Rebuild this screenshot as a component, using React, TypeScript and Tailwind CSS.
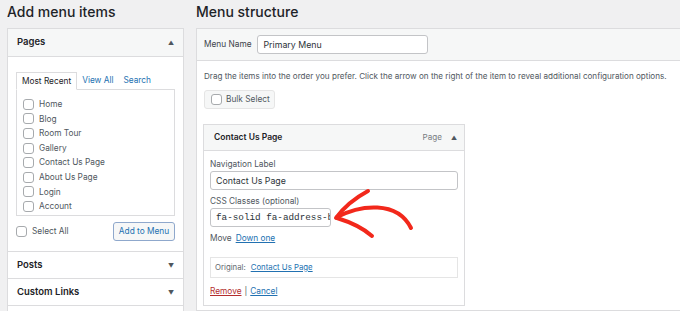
import React from 'react';

const pages = ['Home', 'Blog', 'Room Tour', 'Gallery', 'Contact Us Page', 'About Us Page', 'Login', 'Account'];

const Box = () => (
  <span className="inline-block w-[11px] h-[11px] rounded-[3px] border border-[#a7aaad] bg-white shrink-0" />
);

const Section = ({ title }: { title: string }) => (
  <div className="h-[27px] shrink-0 border-t border-[#dcdcde] px-[9px] flex items-center justify-between">
    <span className="text-[9.5px] font-semibold text-[#1d2327]">{title}</span>
    <span className="text-[6px] text-[#50575e]">▼</span>
  </div>
);

export default function App() {
  return (
    <div
      className="relative w-[680px] h-[311px] overflow-hidden bg-[#f0f0f1] flex gap-[12px] pl-[7px] text-[#3c434a]"
      style={{ fontFamily: 'Inter, "Noto Sans", sans-serif' }}
    >
      {/* left column */}
      <div className="w-[177px] shrink-0 flex flex-col overflow-hidden">
        <h2 className="h-[28px] shrink-0 pt-[3px] text-[14px] font-medium text-[#1d2327] leading-[17px]">Add menu items</h2>
        <div className="border border-[#dcdcde] bg-white flex-1 shrink-0 flex flex-col">
          <div className="h-[27px] shrink-0 bg-[#f6f7f7] px-[9px] flex items-center justify-between">
            <span className="text-[9.5px] font-semibold text-[#1d2327]">Pages</span>
            <span className="text-[6px] text-[#50575e]">▲</span>
          </div>
          <div className="shrink-0 border-t border-[#dcdcde] px-[8px] pt-[15px] pb-[10px]">
            <div className="flex items-end h-[17px] text-[8.3px]">
              <div className="relative z-10 h-[18px] -mb-px px-[5px] border border-b-white border-[#dcdcde] bg-white flex items-center text-[#1d2327]">
                Most Recent
              </div>
              <span className="ml-[5px] h-[17px] flex items-center text-[#2271b1]">View All</span>
              <span className="ml-[10px] h-[17px] flex items-center text-[#2271b1]">Search</span>
            </div>
            <div className="h-[127px] border border-[#dcdcde] pl-[6px] pt-[7px]">
              {pages.map((p) => (
                <div key={p} className="h-[14.6px] flex items-center gap-[5px] text-[8.3px] text-[#50575e]">
                  <Box />
                  <span>{p}</span>
                </div>
              ))}
            </div>
            <div className="mt-[6px] h-[19px] flex items-center justify-between">
              <div className="flex items-center gap-[5px] text-[8.3px] text-[#50575e]">
                <Box />
                <span>Select All</span>
              </div>
              <div className="h-[19px] w-[62px] rounded-[3px] border border-[#8fa8cc] bg-[#f6f7f7] flex items-center justify-center text-[8.3px] text-[#2271b1]">
                Add to Menu
              </div>
            </div>
          </div>
          <Section title="Posts" />
          <Section title="Custom Links" />
          <div className="h-[27px] shrink-0 border-t border-[#dcdcde]" />
        </div>
      </div>

      {/* right column */}
      <div className="flex flex-col overflow-hidden">
        <h2 className="h-[28px] shrink-0 pt-[3px] text-[14px] font-medium text-[#1d2327] leading-[17px]">Menu structure</h2>
        <div className="w-[520px] flex-1 shrink-0 border border-[#dcdcde] bg-white">
          <div className="h-[32px] bg-[#f6f7f7] border-b border-[#dcdcde] px-[7px] flex items-center gap-[5px]">
            <span className="text-[8.3px] text-[#3c434a]">Menu Name</span>
            <div className="h-[19px] w-[171px] rounded-[3px] border border-[#c3c4c7] bg-white px-[6px] flex items-center text-[8.8px] text-[#2c3338]">
              Primary Menu
            </div>
          </div>
          <div className="pl-[6px] pt-[9px]">
            <p className="pl-px text-[8.1px] leading-[12px] text-[#50575e] whitespace-nowrap">
              Drag the items into the order you prefer. Click the arrow on the right of the item to reveal additional configuration options.
            </p>
            <div className="mt-[8px] ml-px h-[19px] w-[71px] rounded-[3px] border border-[#e5e5e5] bg-[#f6f7f7] flex items-center gap-[4px] px-[6px] text-[8.3px] text-[#50575e] whitespace-nowrap">
              <Box />
              <span>Bulk Select</span>
            </div>
            <div className="mt-[15px] w-[262px] border border-[#dcdcde] bg-white">
              <div className="h-[26px] bg-[#f6f7f7] border-b border-[#dcdcde] pl-[10px] pr-[7px] flex items-center justify-between">
                <span className="text-[8.5px] font-semibold text-[#1d2327]">Contact Us Page</span>
                <div className="flex items-center gap-[9px] text-[#787c82]">
                  <span className="text-[8.1px]">Page</span>
                  <span className="text-[6px] text-[#50575e]">▲</span>
                </div>
              </div>
              <div className="px-[6px] pt-[7px] pb-[8px] text-[8.3px]">
                <div className="h-[13px] leading-[13px] text-[#50575e]">Navigation Label</div>
                <div className="h-[19px] rounded-[3px] border border-[#c3c4c7] px-[5px] flex items-center text-[8.8px] text-[#2c3338]">
                  Contact Us Page
                </div>
                <div className="mt-[5px] h-[13px] leading-[13px] text-[#50575e]">CSS Classes (optional)</div>
                <div
                  className="h-[19px] w-[121px] rounded-[3px] border border-[#c3c4c7] px-[5px] flex items-center overflow-hidden whitespace-nowrap text-[9.3px] text-[#2c3338]"
                  style={{ fontFamily: '"Liberation Mono", "DejaVu Sans Mono", monospace' }}
                >
                  fa-solid fa-address-b
                </div>
                <div className="mt-[5px] h-[12px] flex items-center gap-[4px]">
                  <span className="text-[#50575e]">Move</span>
                  <span className="text-[#2271b1] underline">Down one</span>
                </div>
                <div className="mt-[13px] h-[21px] border border-[#e5e5e5] px-[4px] flex items-center gap-[5px] text-[7.8px]">
                  <span className="text-[#646970]">Original:</span>
                  <span className="text-[#2271b1] underline">Contact Us Page</span>
                </div>
                <div className="mt-[7px] h-[12px] flex items-center gap-[3px]">
                  <span className="text-[#b32d2e] underline">Remove</span>
                  <span className="text-[#50575e]">|</span>
                  <span className="text-[#2271b1] underline">Cancel</span>
                </div>
              </div>
            </div>
          </div>
        </div>
      </div>

      {/* annotation arrow */}
      <svg className="absolute left-0 top-0 pointer-events-none" width="680" height="311" viewBox="0 0 680 311" fill="none">
        <g stroke="#f2281b" strokeWidth="4" strokeLinecap="round" strokeLinejoin="round">
          <path d="M337 217 C 360 205, 397 200, 411 228" />
          <path d="M368 191 C 355 198, 344 207, 336 218" />
          <path d="M337 218 C 350 222, 363 228, 372 236" />
        </g>
      </svg>
    </div>
  );
}
